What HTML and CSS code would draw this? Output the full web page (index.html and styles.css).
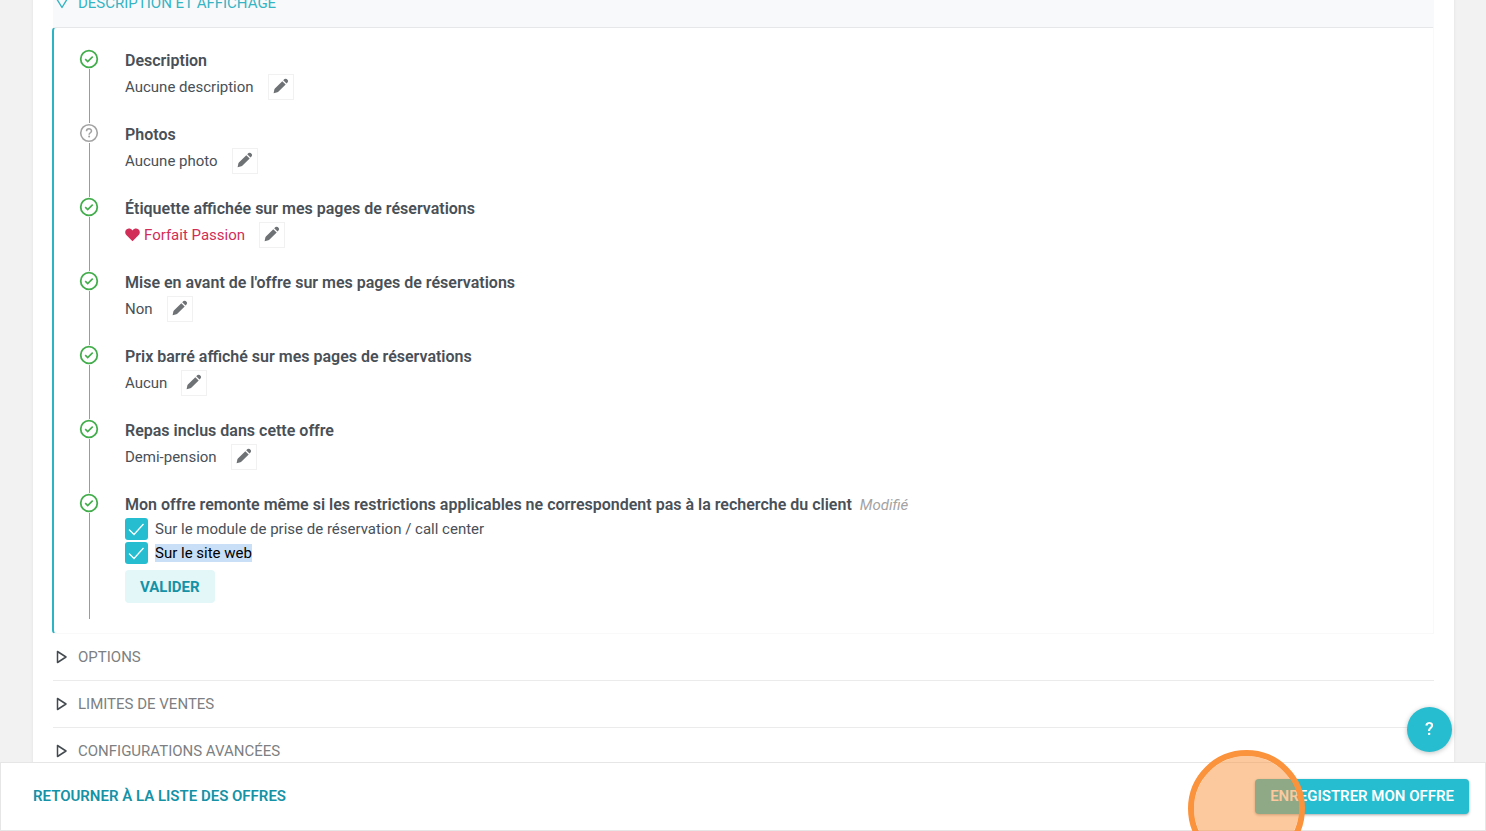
FILE: index.html
```html
<!DOCTYPE html>
<html lang="fr">
<head>
<meta charset="utf-8">
<title>Mon offre</title>
<link rel="stylesheet" href="styles.css">
</head>
<body>
<svg class="sprite" aria-hidden="true">
  <symbol id="ok" viewBox="0 0 20 20"><circle cx="10" cy="10" r="8.3" fill="none" stroke="#43ad4c" stroke-width="1.8"/><path d="M6.2 10.2l2.5 2.4 5-5" fill="none" stroke="#43ad4c" stroke-width="1.6"/></symbol>
  <symbol id="unknown" viewBox="0 0 20 20"><circle cx="10" cy="10" r="8.3" fill="none" stroke="#a3a3a3" stroke-width="1.6"/><path d="M7.5 8.2c0-3.2 5-3.1 5-.3 0 1.8-2.4 1.9-2.4 3.8" fill="none" stroke="#a3a3a3" stroke-width="1.5"/><circle cx="10.1" cy="13.6" r="1" fill="#a3a3a3"/></symbol>
  <symbol id="pencil" viewBox="0 0 16 16"><path d="M.6 15.2l.8-3.9q.1-.5.5-.9l7.4-7.2 3.400 3.400-7.400 7.200q-.4.400-.9.500zM10.200 2.300l1.300-1.200q1.100-.9 2.200 0l1 1q.9 1.100 0 2.200l-1.200 1.300z" fill="#6e7275"/></symbol>
</svg>
<main class="card">
  <button class="section section-open" type="button" aria-expanded="true">
    <svg class="caret" viewBox="0 0 14 14"><path d="M1.5 2.5h11L7 11.5z" fill="none" stroke="#35b4c3" stroke-width="1.4" stroke-linejoin="round"/></svg>
    <span>DESCRIPTION ET AFFICHAGE</span>
  </button>
  <div class="panel">
    <ul class="steps">
      <li class="step">
        <div class="rail"><svg class="status"><use href="#ok"/></svg></div>
        <div class="content"><h3 class="title">Description</h3>
          <div class="value"><span>Aucune description</span><button class="edit" type="button" aria-label="Modifier"><svg class="pencil"><use href="#pencil"/></svg></button></div></div>
      </li>
      <li class="step">
        <div class="rail"><svg class="status"><use href="#unknown"/></svg></div>
        <div class="content"><h3 class="title">Photos</h3>
          <div class="value"><span>Aucune photo</span><button class="edit" type="button" aria-label="Modifier"><svg class="pencil"><use href="#pencil"/></svg></button></div></div>
      </li>
      <li class="step">
        <div class="rail"><svg class="status"><use href="#ok"/></svg></div>
        <div class="content"><h3 class="title">Étiquette affichée sur mes pages de réservations</h3>
          <div class="value"><span class="tag"><svg class="heart" viewBox="0 0 15 14"><path d="M7.5 13.2L1.3 7C-.5 5 .1 2.400 1.800 1.200 3.600.1 6 .5 7.500 2.500 9 .5 11.400.1 13.200 1.200 14.900 2.400 15.500 5 13.700 7z" fill="#d12d58"/></svg>Forfait Passion</span><button class="edit" type="button" aria-label="Modifier"><svg class="pencil"><use href="#pencil"/></svg></button></div></div>
      </li>
      <li class="step">
        <div class="rail"><svg class="status"><use href="#ok"/></svg></div>
        <div class="content"><h3 class="title">Mise en avant de l'offre sur mes pages de réservations</h3>
          <div class="value"><span>Non</span><button class="edit" type="button" aria-label="Modifier"><svg class="pencil"><use href="#pencil"/></svg></button></div></div>
      </li>
      <li class="step">
        <div class="rail"><svg class="status"><use href="#ok"/></svg></div>
        <div class="content"><h3 class="title">Prix barré affiché sur mes pages de réservations</h3>
          <div class="value"><span>Aucun</span><button class="edit" type="button" aria-label="Modifier"><svg class="pencil"><use href="#pencil"/></svg></button></div></div>
      </li>
      <li class="step">
        <div class="rail"><svg class="status"><use href="#ok"/></svg></div>
        <div class="content"><h3 class="title">Repas inclus dans cette offre</h3>
          <div class="value"><span>Demi-pension</span><button class="edit" type="button" aria-label="Modifier"><svg class="pencil"><use href="#pencil"/></svg></button></div></div>
      </li>
      <li class="step">
        <div class="rail"><svg class="status"><use href="#ok"/></svg></div>
        <div class="content">
          <h3 class="title">Mon offre remonte même si les restrictions applicables ne correspondent pas à la recherche du client <em class="modified">Modifié</em></h3>
          <div class="checks">
            <label class="check"><input class="box" type="checkbox" checked><svg class="tick" viewBox="0 0 23 22"><path d="M4 11.500l5 5L18.500 6" /></svg><span>Sur le module de prise de réservation / call center</span></label>
            <label class="check"><input class="box" type="checkbox" checked><svg class="tick" viewBox="0 0 23 22"><path d="M4 11.500l5 5L18.500 6" /></svg><span class="selected">Sur le site web</span></label>
          </div>
          <button class="validate" type="button">VALIDER</button>
        </div>
      </li>
    </ul>
  </div>
  <button class="section" type="button" aria-expanded="false"><svg class="caret" viewBox="0 0 14 14"><path d="M2.500 1.500v11L11 7z" fill="none" stroke="#444b50" stroke-width="1.500" stroke-linejoin="round"/></svg><span>OPTIONS</span></button>
  <button class="section" type="button" aria-expanded="false"><svg class="caret" viewBox="0 0 14 14"><path d="M2.500 1.500v11L11 7z" fill="none" stroke="#444b50" stroke-width="1.500" stroke-linejoin="round"/></svg><span>LIMITES DE VENTES</span></button>
  <button class="section" type="button" aria-expanded="false"><svg class="caret" viewBox="0 0 14 14"><path d="M2.500 1.500v11L11 7z" fill="none" stroke="#444b50" stroke-width="1.500" stroke-linejoin="round"/></svg><span>CONFIGURATIONS AVANCÉES</span></button>
</main>
<footer class="bar">
  <a class="back" href="#">RETOURNER À LA LISTE DES OFFRES</a>
  <button class="save" type="button">ENREGISTRER MON OFFRE</button>
</footer>
<button class="help" type="button" aria-label="Aide">?</button>
<div class="click-marker"></div>
</body>
</html>
```
FILE: styles.css
```css
* { box-sizing: border-box; }
html { height: 100%; overflow: hidden; }
body {
  margin: 0;
  height: 100%;
  overflow: hidden;
  background: #f2f2f2;
  color: #495057;
  font: 15px/24px Roboto, sans-serif;
}
button { font: inherit; border: 0; padding: 0; cursor: pointer; }
.sprite { position: absolute; width: 0; height: 0; }
.card {
  margin: -20px 32px 0 33px;
  padding: 0 20px 60px;
  background: #fff;
  box-shadow: 0 0 3px rgba(0, 0, 0, .08);
}
.section {
  display: flex;
  align-items: center;
  gap: 9px;
  width: 100%;
  height: 47px;
  padding-left: 2px;
  background: #fff;
  border-bottom: 1px solid #ebebeb;
  color: #7d7f82;
  text-align: left;
}
.section-open {
  padding-bottom: 1px;
  background: #f8f9fb;
  color: #35b4c3;
  border: 0;
}
.caret { flex: none; width: 14px; height: 14px; }
.panel {
  margin-left: -1px;
  padding: 21px 0 14px 25px;
  border: 1px solid #f9f9f9;
  border-top-color: #e6e7e8;
  border-left: 2px solid #2bb5c4;
  border-radius: 4px 0 0 4px;
}
.steps { list-style: none; margin: 0; padding: 0; }
.step { display: flex; gap: 26px; min-height: 74px; }
.rail { display: flex; flex-direction: column; align-items: center; width: 20px; }
.rail::after { content: ""; flex: 1; width: 1px; background: #9b9b9b; }
.status { display: block; width: 20px; height: 20px; }
.title { margin: 0; font-size: 16px; line-height: 23px; font-weight: 600; }
.value { display: flex; align-items: center; gap: 14px; margin-top: 2px; }
.edit {
  display: flex;
  align-items: center;
  justify-content: center;
  width: 26px;
  height: 26px;
  padding-bottom: 2px;
  background: #fff;
  border: 1px solid #f1f1f1;
}
.pencil { width: 16px; height: 16px; }
.tag { display: flex; align-items: center; gap: 4px; color: #d12d58; }
.heart { width: 15px; height: 14px; }
.modified { margin-left: 4px; color: #a3a3a3; font-size: 15px; font-weight: 400; }
.checks { display: grid; gap: 2px; justify-items: start; margin-top: 1px; }
.check { display: grid; grid-template-columns: 23px auto; column-gap: 7px; align-items: center; line-height: 18px; }
.box { appearance: none; grid-area: 1 / 1; width: 23px; height: 22px; margin: 0; background: #25bdcf; border-radius: 3px; }
.tick { grid-area: 1 / 1; width: 23px; height: 22px; fill: none; stroke: #fff; stroke-width: 1.3; pointer-events: none; }
.selected { background: #c9dff8; color: #000; }
.validate {
  display: block;
  height: 33px;
  margin: 6px 0 16px;
  padding: 0 15px;
  background: #e3f6f8;
  border-radius: 4px;
  color: #1592a6;
  font-weight: 700;
}
.bar {
  position: fixed;
  left: 0;
  right: 0;
  bottom: 0;
  display: flex;
  align-items: center;
  justify-content: space-between;
  height: 69px;
  padding: 0 16px 0 32px;
  background: #fff;
  border: 1px solid #e6e6e6;
}
.back { padding-bottom: 2px; color: #1592a6; font-weight: 600; text-decoration: none; }
.save {
  height: 35px;
  padding: 0 15px 2px;
  background: #25bdcf;
  border-radius: 4px;
  box-shadow: 0 1px 3px rgba(0, 0, 0, .35);
  color: #fff;
  font-weight: 600;
}
.help {
  position: fixed;
  right: 34px;
  bottom: 79px;
  width: 45px;
  height: 45px;
  padding-bottom: 2px;
  border-radius: 50%;
  background: #25bdcf;
  box-shadow: 0 1px 5px rgba(0, 0, 0, .25);
  color: #fff;
  font-size: 18px;
  font-weight: 500;
}
.click-marker {
  position: fixed;
  right: 181px;
  bottom: -36px;
  width: 117px;
  height: 117px;
  border: 6px solid #fb923c;
  border-radius: 50%;
  background: rgba(250, 148, 62, .5);
  background-clip: padding-box;
  pointer-events: none;
}
```
